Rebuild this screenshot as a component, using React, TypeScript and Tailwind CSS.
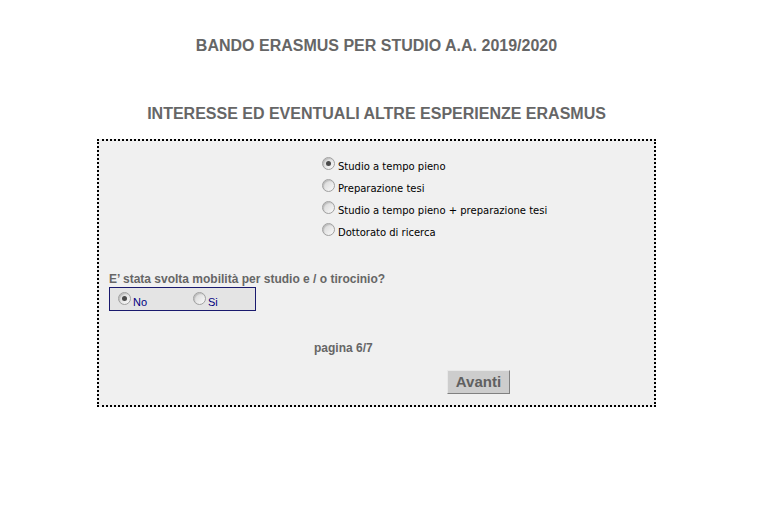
import React from 'react';

const options = [
  { label: 'Studio a tempo pieno', checked: true },
  { label: 'Preparazione tesi', checked: false },
  { label: 'Studio a tempo pieno + preparazione tesi', checked: false },
  { label: 'Dottorato di ricerca', checked: false },
];

// old-style windows radio, drawn by hand so it looks the same everywhere
function Radio({ checked }: { checked: boolean }) {
  return (
    <span className="inline-flex w-[13px] h-[13px] shrink-0 items-center justify-center rounded-full border border-[#a0a0a0] bg-[linear-gradient(135deg,#d4d4d4,#fafafa)] shadow-[inset_1px_1px_1px_rgba(0,0,0,0.15)]">
      {checked && <span className="w-[5px] h-[5px] rounded-full bg-[#4a4a4a]" />}
    </span>
  );
}

export default function App() {
  return (
    <div className="w-[753px] bg-white pb-24 font-['Liberation_Sans',Arial,sans-serif]">
      <h1 className="pt-[37px] text-center text-[16px] font-bold leading-[18px] text-[#666]">
        BANDO ERASMUS PER STUDIO A.A. 2019/2020
      </h1>
      <h2 className="mt-[50px] text-center text-[16px] font-bold leading-[18px] text-[#666]">
        INTERESSE ED EVENTUALI ALTRE ESPERIENZE ERASMUS
      </h2>

      <div className="mx-auto mt-[16px] w-[559px] h-[268px] border-2 border-dotted border-black bg-[#f0f0f0] px-[10px] pt-[16px]">
        {/* tipo di mobilità */}
        <div className="flex flex-col gap-[6px] pl-[213px] font-['DejaVu_Sans',Verdana,sans-serif] text-[10px] leading-[13px] text-black">
          {options.map((o) => (
            <label key={o.label} className="flex items-start gap-[3px]">
              <Radio checked={o.checked} />
              <span className="pt-[3px]">{o.label}</span>
            </label>
          ))}
        </div>

        {/* mobilità precedente */}
        <p className="mt-[33px] text-[12px] font-bold leading-[14px] text-[#666]">
          E’ stata svolta mobilità per studio e / o tirocinio?
        </p>
        <div className="mt-[1px] flex h-[24px] w-[147px] items-start border border-[#1a1a6e] bg-[#e4e4e4] pl-[8px] pt-[4px] text-[11px] leading-[13px] text-[#000080]">
          <label className="flex w-[75px] items-start gap-[2px]">
            <Radio checked={true} />
            <span className="pt-[4px]">No</span>
          </label>
          <label className="flex items-start gap-[2px]">
            <Radio checked={false} />
            <span className="pt-[4px]">Si</span>
          </label>
        </div>

        <p className="mt-[30px] pl-[205px] text-[12px] font-bold leading-[14px] text-[#666]">pagina 6/7</p>

        <div className="mt-[15px] flex pl-[338px]">
          <button className="h-[24px] w-[63px] border border-t-[#e8e8e8] border-l-[#e8e8e8] border-r-[#808080] border-b-[#808080] bg-[#cdcdcd] text-[15px] font-bold leading-[18px] text-[#606060]">
            Avanti
          </button>
        </div>
      </div>
    </div>
  );
}
